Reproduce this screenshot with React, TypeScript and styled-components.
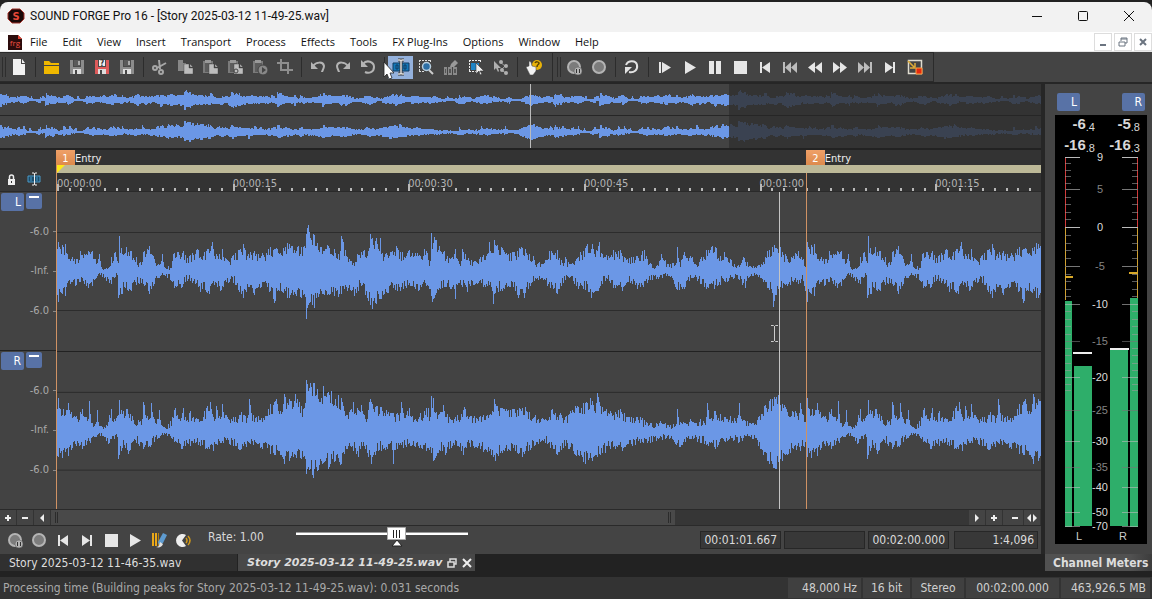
import React from "react";
import styled, { createGlobalStyle } from "styled-components";

const UI = `"DejaVu Sans Condensed", "DejaVu Sans", sans-serif`;
const SYS = `"Open Sans", "Noto Sans", sans-serif`;
const WAVE = "#6b97e6";

const GlobalStyle = createGlobalStyle`
  * { box-sizing: border-box; }
  body { margin: 0; background: #222; font-family: ${UI}; font-size: 12px; color: #d4d4d4; }
  button { font: inherit; color: inherit; border: 0; padding: 0; margin: 0; background: none; }
  svg { display: block; }
`;

/* ---------- waveform data: x, amplitude pairs ---------- */
const L_UP = [57,22,58,29,62,26,65,27,67,17,72,14,77,12,80,20,84,17,88,20,92,20,95,12,99,17,101,4,106,3,109,4,111,14,115,19,118,8,119,35,121,23,126,24,131,20,136,14,140,9,143,19,149,25,153,15,158,7,162,17,164,4,168,5,170,3,173,17,178,19,183,20,187,13,192,18,197,22,204,19,208,22,212,29,217,15,222,22,227,11,232,15,238,21,243,27,248,17,254,20,262,18,270,24,276,23,283,23,287,28,292,25,298,25,304,25,306,37,308,46,310,33,313,37,317,28,320,24,327,26,334,22,340,20,341,35,345,21,351,10,357,17,363,20,369,23,370,37,372,33,376,33,378,22,380,33,382,18,385,17,392,20,396,25,400,19,408,20,417,18,424,22,427,18,430,10,431,38,432,22,434,34,439,25,444,20,450,12,455,22,461,10,462,22,468,13,475,10,480,14,488,18,489,29,491,18,494,31,501,24,506,18,512,19,521,24,525,22,533,15,539,9,543,7,549,20,557,21,561,11,565,14,570,7,576,12,580,19,587,27,592,27,597,20,599,29,601,18,608,15,613,21,620,21,625,13,631,14,637,15,644,21,650,8,656,5,661,17,668,7,672,8,676,8,677,24,679,9,684,19,692,14,695,7,701,14,706,21,712,25,716,23,720,15,724,19,731,11,738,6,743,14,750,5,758,6,763,9,767,20,774,26,777,22,780,24,785,17,791,14,798,20,803,12,806,6];
const L_DN = [57,24,58,31,61,22,65,25,70,13,75,15,80,11,88,17,92,15,95,8,100,4,106,10,111,13,115,6,117,4,118,27,121,23,127,19,131,20,136,14,141,12,149,23,153,15,158,7,164,4,170,9,174,17,181,17,187,10,192,12,200,21,209,23,214,14,220,20,228,12,235,14,243,27,248,16,254,24,261,16,269,21,274,32,279,20,287,27,293,24,300,26,305,26,306,48,308,34,310,31,314,37,319,23,327,24,338,26,344,18,354,25,361,15,368,30,370,34,372,38,376,33,380,28,388,22,400,20,410,15,418,20,425,12,431,25,432,31,436,22,444,16,450,18,454,18,455,28,457,14,462,16,467,21,475,13,485,16,492,20,493,33,495,22,500,20,510,16,518,27,524,27,532,11,540,8,547,15,557,23,563,12,568,6,578,18,585,19,591,27,598,20,605,10,613,17,622,20,630,12,637,18,643,16,650,9,658,8,668,5,677,19,684,18,692,7,700,13,706,18,714,18,720,14,728,10,738,8,745,17,750,5,760,7,767,17,772,22,773,36,775,24,782,17,790,14,798,13,803,10,805,20];
const R_UP = [57,22,58,33,60,22,68,28,75,14,82,22,86,14,88,12,89,30,91,8,95,7,97,21,99,5,106,6,111,22,114,12,117,15,119,31,123,20,127,22,132,15,138,11,142,12,143,29,147,15,149,12,151,28,153,14,157,12,159,21,162,5,165,3,170,10,175,23,178,12,183,23,186,10,190,20,197,12,206,23,210,29,213,14,216,25,219,15,222,27,227,14,235,14,241,19,248,16,249,32,251,18,265,15,270,27,276,32,280,20,284,37,290,30,295,37,299,29,303,22,305,28,306,51,308,40,310,48,313,48,317,42,321,33,323,45,327,38,331,40,338,36,341,33,344,20,350,21,353,29,358,21,361,26,365,12,370,32,376,25,381,24,388,19,393,18,400,18,401,29,403,18,409,23,414,11,420,18,428,23,430,14,431,35,433,33,435,18,443,26,450,12,457,16,464,24,470,15,480,15,490,17,494,32,500,23,512,22,525,24,535,16,545,12,552,22,560,18,565,14,575,25,583,28,590,33,596,28,597,38,600,25,610,20,620,22,628,14,640,14,650,8,660,10,670,6,676,7,677,22,680,9,690,12,700,12,706,14,707,28,710,12,714,20,725,14,738,16,739,28,741,12,745,10,752,8,758,14,764,25,770,32,778,36,784,26,792,20,799,18,800,28,803,16,806,14];
const R_DN = [57,25,62,27,68,25,76,15,82,18,90,12,95,6,103,5,108,13,114,8,117,6,118,28,122,17,128,23,136,12,143,18,150,16,157,8,165,3,174,11,181,18,190,15,198,14,205,18,213,20,220,12,230,14,240,19,250,13,262,18,270,23,280,24,284,33,293,26,300,27,305,28,306,43,310,38,313,47,317,40,325,30,328,38,335,30,340,34,346,18,353,20,358,26,364,15,371,33,378,20,385,19,392,19,393,33,395,19,410,15,422,18,431,22,433,30,440,20,445,24,454,14,463,24,470,16,480,18,495,30,500,22,510,20,522,26,535,14,545,12,557,24,565,15,575,24,585,33,592,30,600,24,610,18,622,20,635,14,650,12,665,8,680,16,690,8,700,12,715,18,727,10,738,12,750,6,760,18,767,30,775,38,782,30,790,22,800,20,806,14];

const hash = (n: number) => {
  const s = Math.sin(n * 127.1 + 11.7) * 43758.5453;
  return s - Math.floor(s);
};

function amp(data: number[], px: number, seed: number): number {
  const x = px >= 806 ? px - 749 : px;
  for (let i = 0; i < data.length - 2; i += 2) {
    const x0 = data[i], x1 = data[i + 2];
    if (x === x0) return data[i + 1];
    if (x > x0 && x < x1) {
      const t = (x - x0) / (x1 - x0);
      const v = data[i + 1] + (data[i + 3] - data[i + 1]) * t;
      const floor = v < 14 ? 0.35 : v < 22 ? 0.5 : 0.6;
      return v * (floor + (1.04 - floor) * hash(x + seed));
    }
  }
  return data[data.length - 1];
}

function wavePath(up: number[], dn: number[], mid: number, width: number, step: number, scale: number) {
  let d = "";
  for (let i = 0; i < width; i++) {
    const x = 57 + Math.floor(i * step);
    let a = 0, b = 0;
    for (let k = 0; k < Math.ceil(step); k++) {
      a = Math.max(a, amp(up, x + k, 3));
      b = Math.max(b, amp(dn, x + k, 71));
    }
    const top = Math.max(1, Math.round(a * scale));
    const bot = Math.max(1, Math.round(b * scale));
    d += `M${i} ${mid - top}h1v${top + bot}h-1z`;
  }
  return d;
}

const MAIN_L = wavePath(L_UP, L_DN, 79, 984, 1, 1);
const MAIN_R = wavePath(R_UP, R_DN, 79, 984, 1, 1);
const OVER_L = wavePath(L_UP, L_DN, 16, 1041, 1.351, 0.21);
const OVER_R = wavePath(R_UP, R_DN, 48, 1041, 1.351, 0.21);

/* ---------- icons ---------- */
const Svg = ({ children, w = 18, h = 18 }: { children: React.ReactNode; w?: number; h?: number }) => (
  <svg width={w} height={h} viewBox={`0 0 ${w} ${h}`} aria-hidden="true">{children}</svg>
);

const floppy = (body: string) => (
  <>
    <path d="M2 2h14v14H2z" fill={body} />
    <path d="M5 2h8v6H5z" fill={body === "#8c8c8c" ? "#5a5a5a" : "#eee"} />
    <path d="M10 3h2v4h-2z" fill={body === "#8c8c8c" ? "#aaa" : "#eee"} />
    <path d="M5 2h1v6h6V2h1v7H5z" fill="#4a4a4a" />
    <path d="M5 11h8v5H5z" fill="#ddd" /><path d="M7 12h2v4H7z" fill="#444" />
  </>
);
const recordDot = <circle cx="9" cy="9" r="6" fill="#7c7c7c" stroke="#b4b4b4" strokeWidth="2" />;
const sheet = (x: number, y: number, c: string) => (
  <path d={`M${x} ${y}h5v4h4v6h-9z M${x + 6} ${y}l3 3h-3z`} fill={c} stroke="#3c3c3c" strokeWidth=".4" />
);
const clip = <><path d="M2 3h10v12H2z" fill="#7a7a7a" /><path d="M4 5h7v9H4z" fill="#5c5c5c" /><path d="M4 2h6v3H4z" fill="#999" /></>;

const icons: Record<string, React.ReactNode> = {
  new: <><path d="M3 1h8v5h4v11H3z" fill="#f2f2f2" /><path d="M12 1l3 4h-3z" fill="#f2f2f2" /></>,
  open: <path d="M1 3h5l2 2h8v2H1z M1 8h15v8H1z" fill="#f0b800" />,
  save: floppy("#8c8c8c"),
  saveAs: <>{floppy("#dd5a5a")}<text x="9" y="8" fontSize="8" fontWeight="bold" textAnchor="middle" fill="#333">?</text></>,
  cut: <g fill="none" stroke="#a6a6a6" strokeWidth="2"><path d="M8 2l1 9M15 5L6 10" /><circle cx="4" cy="10" r="2" /><circle cx="10" cy="14" r="2" /></g>,
  copy: <><path d="M2 2h5v3h3v8H2z" fill="#888" />{sheet(8, 6, "#bdbdbd")}</>,
  paste: <>{clip}{sheet(8, 6, "#bdbdbd")}</>,
  pasteMix: <>{clip}{sheet(8, 6, "#bdbdbd")}<circle cx="10" cy="13" r="2" fill="none" stroke="#444" strokeWidth="1" /></>,
  pastePlay: <>{clip}<circle cx="12" cy="12" r="5" fill="#888" stroke="#444" /><path d="M11 9l4 3-4 3z" fill="#444" /></>,
  crop: <g fill="none" stroke="#8e8e8e" strokeWidth="2"><path d="M5 1v11h12M1 5h11v11" /></g>,
  undo: <><path d="M4 8C7 4 14 3 15 8c0 3-2 5-2 6" fill="none" stroke="#b4b4b4" strokeWidth="2" /><path d="M2 4v7h7z" fill="#b4b4b4" /></>,
  redo: <><path d="M14 8C11 4 4 3 3 8c0 3 2 5 2 6" fill="none" stroke="#b4b4b4" strokeWidth="2" /><path d="M16 4v7H9z" fill="#b4b4b4" /></>,
  repeat: <><path d="M4 6c4-5 11-2 11 3s-5 7-9 5" fill="none" stroke="#b4b4b4" strokeWidth="2" /><path d="M2 2v7h7z" fill="#b4b4b4" /></>,
  edit: <><path d="M1 5h16v8H1z" fill="#1478b8" stroke="#103a60" /><path d="M4 7h2v4H4zM12 7h2v4h-2z" fill="none" stroke="#103a60" /><path d="M6 2h2l1 1 1-1h2M9 3v12M6 16h2l1-1 1 1h2" fill="none" stroke="#333" strokeWidth="3" /><path d="M6 2h2l1 1 1-1h2M9 3v12M6 16h2l1-1 1 1h2" fill="none" stroke="#ddd" strokeWidth="1.500" /></>,
  magnify: <><path d="M2 2.500h12M2.500 2v12M2 13.500h5M13.500 2v3" fill="none" stroke="#ddd" strokeDasharray="2 1" /><path d="M12 12l4 4" stroke="#ccc" strokeWidth="2" /><circle cx="9.500" cy="8.500" r="4" fill="#2d6fa5" stroke="#b8cede" strokeWidth="1.500" /></>,
  pencil: <><path d="M2 9h3v8H2zM6 9h4v8H6zM11 9h4v8h-4z" fill="#8a8a8a" /><path d="M3 11h1v4H3zM7 11h2v4H7zM12 11h2v4h-2z" fill="#555" /><path d="M8 9l1-3 4-4 3 3-4 4z" fill="#999" /></>,
  event: <><path d="M2 2.500h12M2.500 2v12M2 13.500h7M13.500 2v3" fill="none" stroke="#eee" strokeDasharray="2 1" /><path d="M4 5h8v7H4z" fill="#1d84c6" /><path d="M9 5v11l3-3 1 4 2-1-2-3h4z" fill="#eee" stroke="#333" strokeWidth=".6" /></>,
  envelope: <><path d="M2 3v9l2-2 2 4 1-1-1-3h3z" fill="#b0b0b0" /><path d="M8 4l5 4-4 4 5 3" fill="none" stroke="#999" /><circle cx="9" cy="4" r="2" fill="#b0b0b0" /><circle cx="14" cy="8" r="2" fill="#b0b0b0" /><circle cx="10" cy="12" r="2" fill="#b0b0b0" /><circle cx="14" cy="15" r="2" fill="#b0b0b0" /></>,
  help: <><circle cx="12" cy="7" r="5" fill="#e9b308" /><path d="M10 5c1-2 4-1 4 0 0 2-2 1-2 4" fill="none" stroke="#5a4300" strokeWidth="1.500" /><path d="M1 9l3-1V3l2 1 1 4 4 1v4l-3 4H5z" fill="#f2f2f2" stroke="#444" strokeWidth=".5" /></>,
  recordHold: <>{recordDot}<circle cx="13" cy="13" r="4" fill="#b4b4b4" stroke="#555" strokeWidth=".5" /><path d="M11 11h1v4h-1zM14 11h1v4h-1z" fill="#333" /></>,
  record: recordDot,
  loop: <><path d="M3 7c2-5 10-5 11 0s-3 8-8 7" fill="none" stroke="#e2e2e2" strokeWidth="2" /><path d="M9 9H2v7z" fill="#e2e2e2" /></>,
  playAll: <path d="M3 4h2v11H3zM6 4l9 5.500L6 15z" fill="#e6e6e6" />,
  play: <path d="M4 3l11 6.500L4 16z" fill="#e6e6e6" />,
  pause: <path d="M3 3h5v13H3zM10 3h5v13h-5z" fill="#e6e6e6" />,
  stop: <path d="M3 3h13v13H3z" fill="#e6e6e6" />,
  start: <path d="M4 4h2v11H4zM14 4v11L6 9.500z" fill="#e6e6e6" />,
  end: <path d="M12 4h2v11h-2zM4 4v11l8-5.500z" fill="#e6e6e6" />,
  prev: <path d="M2 4h2v11H2zM10 4v11L4 9.500zM16 4v11l-6-5.500z" fill="#bcbcbc" />,
  next: <path d="M14 4h2v11h-2zM2 4v11l6-5.500zM8 4v11l6-5.500z" fill="#bcbcbc" />,
  rewind: <path d="M9 4v11L2 9.500zM16 4v11L9 9.500z" fill="#e6e6e6" />,
  forward: <path d="M2 4v11l7-5.500zM9 4v11l7-5.500z" fill="#e6e6e6" />,
  script: <><path d="M2.500 2.500h13v13h-13z" fill="none" stroke="#e0dcd0" strokeWidth="1.500" /><path d="M2 3l6 6M9 5v5H4" fill="none" stroke="#e0ac38" strokeWidth="1.500" /><path d="M10 10h6v6h-6z" fill="#e62a10" stroke="#ffa040" /></>,
  scrub: <><path d="M2 2h2v13H2zM5 2h2v13H5z" fill="#eaa818" /><path d="M8 2h1v13H8z" fill="#b37e10" /><path d="M8 11l5-9 4 2-4 8-4 2z" fill="#5e9bd0" /><path d="M6 16c4 0 3-3 4-5l3 2c-1 3-4 4-7 3z" fill="#e0e0e0" /></>,
  pac: <><path d="M12 4a6.500 6.500 0 1 0 0 11L8 9.500z" fill="#eee" /><path d="M12 7q2 2.500 0 5M14 5q4 4.500 0 9" fill="none" stroke="#d49a18" strokeWidth="1.500" /></>,
};

/* ---------- chrome ---------- */
const Window = styled.div`display: flex; flex-direction: column; min-height: 100vh; background: #222; padding-top: 2px; overflow: hidden;`;
const TitleBar = styled.header`
  display: flex; align-items: center; height: 30px; padding: 0 0 2px 7px; background: #f2f2f2; color: #111;
  border-radius: 8px 8px 0 0;
`;
const TitleText = styled.h1`margin: 0 auto 0 5px; font: 400 12px Roboto, ${SYS};`;
const CaptionButton = styled.button`width: 46px; height: 28px; display: grid; place-items: center;`;
const MenuBar = styled.nav`
  display: flex; align-items: center; height: 20px; padding-left: 7px; background: #fff;
  border-bottom: 1px solid #e8e8e8; color: #111; font: 11px ${SYS};
`;
const MenuList = styled.div`display: flex; gap: 15px; margin-left: 8px;`;
const MenuItem = styled.button`white-space: nowrap;`;
const MdiButtons = styled.div`display: flex; gap: 2px; margin-left: auto;`;
const MdiButton = styled.button`width: 18px; height: 18px; display: grid; place-items: center; border: 1px solid #ddd; background: #fff;`;
const ToolStrip = styled.div`display: flex; height: 32px; background: #444; border-bottom: 2px solid #262626;`;
const ToolGroup = styled.div`
  display: flex; align-items: center; height: 30px; padding-right: 6px; border: 1px solid #2b2b2b; border-left: 0;
  & + & { padding-left: 2px; }
`;
const Grip = styled.i`width: 4px; height: 20px; margin-left: 2px; border: solid #2e2e2e; border-width: 0 1px;`;
const Sep = styled.i`width: 8px; height: 20px; display: block; background: linear-gradient(#2c2c2c, #2c2c2c) 4px 0 / 1px 100% no-repeat;`;
const ToolButton = styled.button<{ $on?: boolean; $w?: number }>`
  position: relative; display: grid; place-items: center; width: ${p => p.$w ?? 25}px; height: 23px;
  background: ${p => (p.$on ? "#94b1dc" : "none")};
`;
const Pointer = styled.span`position: absolute; left: -5px; top: 5px; pointer-events: none;`;

const Body = styled.main`display: flex; flex: 1; min-height: 0;`;
const Editor = styled.section`display: flex; flex-direction: column; flex: 1; min-width: 0;`;
const EditorFrame = styled.div`display: flex; flex-direction: column; flex: 1; background: #444; border-right: 4px solid #262626; min-height: 0;`;
const Overview = styled.div`height: 66px; border-bottom: 2px solid #222; svg { width: 100%; height: 64px; }`;
const Timeline = styled.div`display: grid; grid-template-columns: 57px 1fr; grid-template-rows: 42px 1fr; flex: 1; min-height: 0;`;
const Corner = styled.div`display: flex; align-items: flex-end; gap: 11px; padding: 0 0 5px 7px; background: #383838; border-bottom: 1px solid #2a2a2a;`;
const RulerArea = styled.div`position: relative; background: #333; border-bottom: 1px solid #2a2a2a;`;
const MarkerRow = styled.div`position: relative; height: 15px;`;
const Marker = styled.span<{ $at: number }>`position: absolute; left: ${p => p.$at}%; top: 0; display: flex; margin-left: -1px; line-height: 17px; font-size: 11px; color: #f0f0f0;`;
const Flag = styled.b`width: 19px; height: 15px; background: linear-gradient(#efa068, #dd8a4c); text-align: center; font-weight: 400; color: #fff; line-height: 17px;`;
const Region = styled.div`height: 8px; background: #bdb998;`;
const LoopStart = styled.i`display: block; width: 8px; height: 8px; background: #ffe818; clip-path: polygon(0 0, 100% 0, 0 100%);`;
const Ruler = styled.div`position: relative; height: 18px; overflow: hidden; > svg { position: absolute; inset: 0; width: 100%; height: 100%; }`;
const RulerLabels = styled.div`display: flex; color: #b4b4b4; font-size: 11px; line-height: 21px;`;
const RulerLabel = styled.span`flex: 0 0 17.85%;`;
const Gutters = styled.div`display: flex; flex-direction: column; background: #434343;`;
const Gutter = styled.div`flex: 1; display: flex; flex-direction: column; padding-bottom: 19px; & + & { border-top: 1px solid #222; }`;
const GutterTop = styled.div`display: flex; gap: 2px; height: 20px; padding: 1px 0 0 1px;`;
const ChannelButton = styled.button<{ $h?: number; $w: number }>`
  width: ${p => p.$w}px; height: ${p => p.$h ?? 18}px; padding-right: 3px; text-align: right; border-radius: 2px;
  background: #5872a6; color: #fff; line-height: 18px;
`;
const MiniBar = styled.i`display: block; width: 10px; height: 2px; margin: -5px 0 0 3px; background: #fff;`;
const DbLabels = styled.div`flex: 1; display: flex; flex-direction: column; justify-content: space-around; align-items: flex-end;`;
const DbLabel = styled.span`
  display: flex; align-items: center; gap: 4px; padding-right: 1px; color: #aaa; font-size: 11px; line-height: 12px;
  &::after { content: ""; width: 3px; height: 1px; background: #888; }
`;
const Lanes = styled.div`position: relative; display: flex; flex-direction: column; background: #434343;`;
const Lane = styled.div`position: relative; flex: 1 1 158px; min-height: 0; & + & { border-top: 1px solid #222; } svg { width: 100%; height: 100%; position: absolute; inset: 0; }`;
const VLine = styled.i<{ $at: number; $c: string; $up?: number }>`
  position: absolute; left: ${p => p.$at}%; top: ${p => -(p.$up ?? 0)}px; bottom: 0; width: 1px; margin-left: -1px; background: ${p => p.$c};
`;
const TextCursor = styled.span`position: absolute; left: 72.500%; top: 42%;`;

const ScrollRow = styled.div`display: flex; height: 17px; border: solid #2a2a2a; border-width: 1px 0; background: #444; align-items: stretch;`;
const ScrollButton = styled.button`width: 17px; display: grid; place-items: center; border-right: 1px solid #333;`;
const ScrollGap = styled.i`width: 4px;`;
const ScrollTrack = styled.div`flex: 1; display: flex; background: #363636;`;
const ScrollThumb = styled.div`width: 68%; display: flex; justify-content: space-between; background: #494949; padding: 2px 4px;`;
const ThumbGrip = styled.i`width: 3px; border: solid #2b2b2b; border-width: 0 1px;`;
const PlayRow = styled.div`display: flex; align-items: center; height: 28px; padding: 0 3px; background: #444;`;
const RateLabel = styled.label`margin: -6px 0 0 13px; width: 84px; color: #d8d8d8;`;
const RateSlider = styled.input`
  appearance: none; width: 180px; height: 24px; margin: -6px 0 0; background: linear-gradient(#999, #999) 4px 7px / 172px 1px no-repeat, linear-gradient(#fff, #fff) 4px 8px / 172px 2px no-repeat;
  &::-webkit-slider-thumb {
    appearance: none; width: 19px; height: 20px;
    background: url("data:image/svg+xml,%3Csvg xmlns='http://www.w3.org/2000/svg' width='19' height='20'%3E%3Cpath d='M.5.5h18v12H.5z' fill='%23fff' stroke='%23aaa'/%3E%3Cpath d='M6.500 3v8M9.500 3v8M12.500 3v8' stroke='%23222'/%3E%3Cpath d='M10 13l5 6H5z' fill='%23fff' stroke='%23222'/%3E%3C/svg%3E") no-repeat;
  }
`;
const Fields = styled.div`display: flex; gap: 3px; margin-left: auto;`;
const Field = styled.output<{ $w?: number; $gap?: boolean }>`
  width: ${p => p.$w ?? 81}px; height: 18px; margin-left: ${p => (p.$gap ? 2 : 0)}px; border: 1px solid #272727; background: #383838;
  text-align: right; padding-right: 3px; line-height: 17px; color: #dcdcdc;
`;

const DocTabs = styled.div`display: flex; height: 17px; background: #222;`;
const DocTab = styled.button<{ $on?: boolean }>`
  display: flex; align-items: center; gap: 5px; width: 238px; padding-left: 9px; white-space: nowrap;
  background: ${p => (p.$on ? "#484848" : "#303030")}; border-right: 1px solid #222; color: #dedede;
  ${p => p.$on && "font-size: 11px; font-weight: 700; font-style: italic; font-family: 'DejaVu Sans', sans-serif;"}
`;

const MeterPanel = styled.aside`display: flex; flex-direction: column; width: 107px; background: #444; padding: 9px 5px 0 10px;`;
const MeterHead = styled.div`display: flex; justify-content: space-between; padding: 0 2px; margin-bottom: 4px;`;
const MeterBox = styled.div`flex: 1; background: #000; font-family: "Liberation Sans", Arial, sans-serif; color: #d8d8d8; svg { width: 100%; overflow: visible; }`;
const MeterTab = styled.h2`margin: 10px -5px 0 -10px; padding-left: 8px; height: 17px; background: linear-gradient(90deg, #515151 80%, #3c3c3c); font-size: 12px; line-height: 18px; white-space: nowrap; overflow: hidden; color: #ddd;`;
const Peaks = styled.div`display: grid; grid-template-columns: 1fr 45px; row-gap: 3px; padding-right: 7px; line-height: 18px; text-align: right;`;
const Peak = styled.span`height: 18px; font-size: 15px; font-weight: 700;`;
const Frac = styled.small`font-size: 11px; font-weight: 400; vertical-align: -2px;`;

const StatusBar = styled.footer`display: flex; align-items: center; gap: 2px; height: 22px; margin-top: 6px; padding-right: 2px; background: #333; color: #d0d0d0;`;
const StatusText = styled.span`flex: 1; padding-left: 3px; color: #a9a9a9; white-space: nowrap; overflow: hidden;`;
const StatusCell = styled.span<{ $w: number }>`width: ${p => p.$w}px; height: 20px; line-height: 20px; text-align: right; padding-right: 4px; background: #404040; white-space: nowrap;`;
const CenterCell = styled(StatusCell)`text-align: center; padding: 0;`;

const DB: [string, number, boolean][] = [["9", 3, true], ["5", 35, false], ["0", 73, true], ["-5", 112, false], ["-10", 150, true], ["-15", 187, false], ["-20", 223, true], ["-25", 256, false], ["-30", 287, true], ["-35", 313, false], ["-40", 333, true], ["-50", 358, true], ["-70", 372, true]];

function Meter() {
  const ticks: React.ReactNode[] = [];
  DB.forEach(([label, y, major], i) => {
    ticks.push(<path key={label} d={`M10 ${y + .5}h15M67 ${y + .5}h16`} stroke={major ? "#bbb" : "#777"} opacity={y > 144 ? .6 : 1} />);
    if (i < 10) for (let k = 1; k < 5; k++) {
      const yy = Math.round(y + ((DB[i + 1][1] - y) * k) / 5);
      if (yy < 240) ticks.push(<path key={`${label}${k}`} d={`M10 ${yy + .5}h6M77 ${yy + .5}h6`} stroke="#999" opacity=".6" />);
    }
  });
  return (
    <svg viewBox="0 0 92 390" role="img" aria-label="Channel levels" shapeRendering="crispEdges">
      <path d="M10.500 3v71M82.500 3v71" stroke="#d03a3a" />
      <path d="M10.500 74v72M82.500 74v72" stroke="#d0a030" />
      <path d="M10 147h7v226h-7zM19 212h18v160H19zM55 196h18v176H55zM75 144h8v229h-8z" fill="#2eae6a" />
      {ticks}
      <path d="M18 198h19v2H18zM55 194h19v2H55z" fill="#eee" />
      <path d="M10 122h8v2h-8zM74 118h9v2h-9z" fill="#d8a828" />
      <g fontSize="11" textAnchor="middle">
        {DB.map(([label, y, major]) => <text key={label} x="45" y={y + 4} fill={major ? "#dcdcdc" : "#848484"}>{label}</text>)}
        <text x="24" y="386" fill="#ccc">L</text><text x="68" y="386" fill="#ccc">R</text>
      </g>
    </svg>
  );
}

const fileTools = ["new", "|", "open", "save", "saveAs", "save", "|", "cut", "copy", "paste", "pasteMix", "pastePlay", "crop", "|", "undo", "redo", "repeat", "|", "edit", "magnify", "pencil", "event", "envelope", "|", "help"];
const playTools = ["recordHold", "record", "|", "loop", "|", "playAll", "play", "pause", "stop", "start", "prev", "rewind", "forward", "next", "end", "script"];
const menus = ["File", "Edit", "View", "Insert", "Transport", "Process", "Effects", "Tools", "FX Plug-Ins", "Options", "Window", "Help"];
const times = ["00:00:00", "00:00:15", "00:00:30", "00:00:45", "00:01:00", "00:01:15"];

function Tools({ list }: { list: string[] }) {
  return (
    <>
      {list.map((name, i) => name === "|" ? <Sep key={i} /> : (
        <ToolButton key={i} aria-label={name} $on={name === "edit"}>
          <Svg>{icons[name]}</Svg>
          {name === "edit" && (
            <Pointer><Svg w={12} h={19}><path d="M1 1v15l3-3 2 5 3-1-2-5h4z" fill="#fff" stroke="#222" strokeWidth=".8" /></Svg></Pointer>
          )}
        </ToolButton>
      ))}
    </>
  );
}

function ChannelGutter({ name }: { name: string }) {
  return (
    <Gutter>
      <GutterTop>
        <ChannelButton $w={23}>{name}</ChannelButton>
        <ChannelButton $w={16} $h={16} aria-label={`Minimize ${name}`}><MiniBar /></ChannelButton>
      </GutterTop>
      <DbLabels><DbLabel>-6.0</DbLabel><DbLabel>-Inf.</DbLabel><DbLabel>-6.0</DbLabel></DbLabels>
    </Gutter>
  );
}

function WaveLane({ d }: { d: string }) {
  return (
    <Lane>
      <svg viewBox="0 0 984 158" preserveAspectRatio="none" shapeRendering="crispEdges">
        <path d="M0 40.500h984M0 118.500h984" stroke="#2c2c2c" />
        <path d={d} fill={WAVE} />
      </svg>
    </Lane>
  );
}

export default function App() {
  let ticks = "";
  for (let i = 0; i < 85; i++) {
    const x = Math.round(i * 11.71);
    const h = i % 15 === 0 ? 7 : 3;
    ticks += `M${x} ${18 - h}h2v${h}h-2z`;
  }
  return (
    <>
      <GlobalStyle />
      <Window>
        <TitleBar>
          <Svg w={18} h={16}><path d="M5 1h8l4 4v6l-4 4H5l-4-4V5z" fill="#1a0808" stroke="#a03028" /><text x="9" y="12" fontSize="11" fontWeight="bold" textAnchor="middle" fill="#e84838">S</text></Svg>
          <TitleText>SOUND FORGE Pro 16 - [Story 2025-03-12 11-49-25.wav]</TitleText>
          <CaptionButton aria-label="Minimize"><Svg w={12} h={12}><path d="M1 6.500h10" stroke="#111" /></Svg></CaptionButton>
          <CaptionButton aria-label="Maximize"><Svg w={12} h={12}><rect x="1.500" y="1.500" width="9" height="9" rx="1" fill="none" stroke="#111" /></Svg></CaptionButton>
          <CaptionButton aria-label="Close"><Svg w={12} h={12}><path d="M1 1l10 10M11 1L1 11" stroke="#111" /></Svg></CaptionButton>
        </TitleBar>
        <MenuBar>
          <Svg w={15} h={16}><path d="M1 1h10l4 4v11H1z" fill="#2b0c0c" /><path d="M11 1l4 4h-4z" fill="#e04030" /><text x="8" y="12" fontSize="8" textAnchor="middle" fill="#f05040">frg</text></Svg>
          <MenuList>{menus.map(m => <MenuItem key={m}>{m}</MenuItem>)}</MenuList>
          <MdiButtons>
            <MdiButton aria-label="Minimize document"><Svg w={10} h={10}><path d="M2 8h6" stroke="#6b7480" strokeWidth="2" /></Svg></MdiButton>
            <MdiButton aria-label="Restore document"><Svg w={10} h={10}><path d="M1 5h6v4H1zM3 4V1h6v5H7M3 2h6" fill="none" stroke="#6b7480" /></Svg></MdiButton>
            <MdiButton aria-label="Close document"><Svg w={10} h={10}><path d="M2 2l6 6M8 2L2 8" stroke="#6b7480" strokeWidth="2" /></Svg></MdiButton>
          </MdiButtons>
        </MenuBar>
        <ToolStrip>
          <ToolGroup><Grip /><Tools list={fileTools} /></ToolGroup>
          <ToolGroup><Grip /><Tools list={playTools} /></ToolGroup>
        </ToolStrip>
        <Body>
          <Editor>
            <EditorFrame>
              <Overview>
                <svg viewBox="0 0 1041 64" preserveAspectRatio="none" shapeRendering="crispEdges">
                  <rect width="1041" height="64" fill="#434343" />
                  <path d={OVER_L + OVER_R} fill={WAVE} />
                  <rect x="729" width="312" height="64" fill="#303030" opacity=".82" />
                  <path d="M0 31.500h1041" stroke="#262626" />
                  <path d="M530.500 0v64" stroke="#bbb" />
                </svg>
              </Overview>
              <Timeline>
                <Corner>
                  <Svg w={9} h={12}><path d="M1 5h7v6H1z" fill="#eee" /><path d="M2.500 5V3a2 2 0 0 1 4 0v2" fill="none" stroke="#eee" strokeWidth="1.500" /><path d="M4 7h1v2H4z" fill="#333" /></Svg>
                  <Svg w={14} h={14}><path d="M1 4h12v6H1z" fill="#1c4c6a" stroke="#4a9ac8" /><path d="M4 5v4M10 5v4" stroke="#4a9ac8" /><path d="M5 1h2l.5 1 .5-1h2M7.500 2v10M5 13h2l.5-1 .5 1h2" fill="none" stroke="#eee" /></Svg>
                </Corner>
                <RulerArea>
                  <MarkerRow>
                    <Marker $at={0}><Flag>1</Flag>Entry</Marker>
                    <Marker $at={76.2}><Flag>2</Flag>Entry</Marker>
                  </MarkerRow>
                  <Region><LoopStart /></Region>
                  <Ruler>
                    <svg viewBox="0 0 984 18" preserveAspectRatio="none" shapeRendering="crispEdges"><path d={ticks} fill="#b8b8b8" /></svg>
                    <RulerLabels>{times.map(t => <RulerLabel key={t}>{t}</RulerLabel>)}</RulerLabels>
                  </Ruler>
                </RulerArea>
                <Gutters><ChannelGutter name="L" /><ChannelGutter name="R" /></Gutters>
                <Lanes>
                  <WaveLane d={MAIN_L} />
                  <WaveLane d={MAIN_R} />
                  <VLine $at={0} $c="#cf9264" $up={27} />
                  <VLine $at={76.2} $c="#cf9264" $up={19} />
                  <VLine $at={73.5} $c="#c4c4c4" />
                  <TextCursor><Svg w={9} h={17}><path d="M1 .5h2.500l1 1 1-1H8M4.500 1v15M1 16.500h2.500l1-1 1 1H8" fill="none" stroke="#ccc" /></Svg></TextCursor>
                </Lanes>
              </Timeline>
              <ScrollRow>
                <ScrollButton aria-label="Zoom in height"><Svg w={8} h={8}><path d="M4 1v6M1 4h6" stroke="#eee" strokeWidth="2" /></Svg></ScrollButton>
                <ScrollButton aria-label="Zoom out height"><Svg w={8} h={8}><path d="M1 4h6" stroke="#eee" strokeWidth="2" /></Svg></ScrollButton>
                <ScrollButton aria-label="Scroll left"><Svg w={8} h={8}><path d="M6 0v8L2 4z" fill="#eee" /></Svg></ScrollButton>
                <ScrollTrack><ScrollThumb><ThumbGrip /><ThumbGrip /></ScrollThumb></ScrollTrack>
                <ScrollButton aria-label="Scroll right"><Svg w={8} h={8}><path d="M2 0v8l4-4z" fill="#eee" /></Svg></ScrollButton>
                <ScrollButton aria-label="Zoom in time"><Svg w={8} h={8}><path d="M4 1v6M1 4h6" stroke="#eee" strokeWidth="2" /></Svg></ScrollButton>
                <ScrollGap />
                <ScrollButton aria-label="Zoom out time"><Svg w={8} h={8}><path d="M1 4h6" stroke="#eee" strokeWidth="2" /></Svg></ScrollButton>
                <ScrollButton aria-label="Fit"><Svg w={12} h={8}><path d="M5 0v8L1 4zM7 0v8l4-4z" fill="#eee" /></Svg></ScrollButton>
              </ScrollRow>
              <PlayRow>
                {["recordHold", "record", "start", "end", "stop", "play", "scrub", "pac"].map(n => (
                  <ToolButton key={n} $w={24} aria-label={n}><Svg>{icons[n]}</Svg></ToolButton>
                ))}
                <RateLabel htmlFor="rate">Rate: 1.00</RateLabel>
                <RateSlider id="rate" type="range" min="0" max="100" defaultValue="59" />
                <Fields>
                  <Field>00:01:01.667</Field><Field /><Field>00:02:00.000</Field><Field $w={84} $gap>1:4,096</Field>
                </Fields>
              </PlayRow>
            </EditorFrame>
            <DocTabs>
              <DocTab>Story 2025-03-12 11-46-35.wav</DocTab>
              <DocTab $on>
                Story 2025-03-12 11-49-25.wav
                <Svg w={10} h={10}><path d="M1 4h6v5H1zM3 4V1h6v5H7" fill="none" stroke="#ddd" strokeWidth="1.500" /></Svg>
                <Svg w={10} h={10}><path d="M1 1l8 8M9 1L1 9" stroke="#eee" strokeWidth="2" /></Svg>
              </DocTab>
            </DocTabs>
          </Editor>
          <MeterPanel>
            <MeterHead><ChannelButton $w={23}>L</ChannelButton><ChannelButton $w={23}>R</ChannelButton></MeterHead>
            <MeterBox>
              <Peaks>
                <Peak>-6<Frac>.4</Frac></Peak><Peak>-5<Frac>.8</Frac></Peak>
                <Peak>-16<Frac>.8</Frac></Peak><Peak>-16<Frac>.3</Frac></Peak>
              </Peaks>
              <Meter />
            </MeterBox>
            <MeterTab>Channel Meters</MeterTab>
          </MeterPanel>
        </Body>
        <StatusBar>
          <StatusText>Processing time (Building peaks for Story 2025-03-12 11-49-25.wav): 0.031 seconds</StatusText>
          <StatusCell $w={73}>48,000 Hz</StatusCell>
          <CenterCell $w={47}>16 bit</CenterCell>
          <CenterCell $w={52}>Stereo</CenterCell>
          <CenterCell $w={93}>00:02:00.000</CenterCell>
          <StatusCell $w={89}>463,926.5 MB</StatusCell>
        </StatusBar>
      </Window>
    </>
  );
}
